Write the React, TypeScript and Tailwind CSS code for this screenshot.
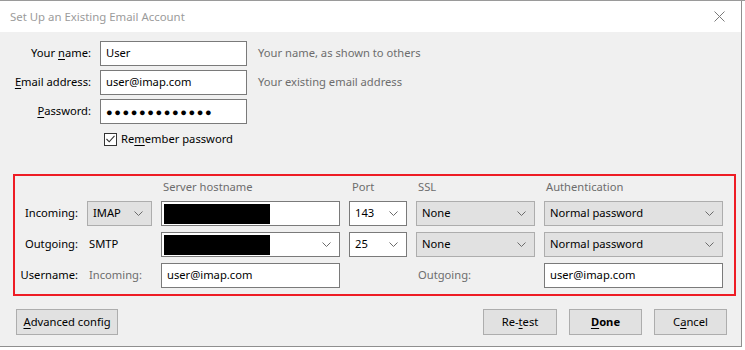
import React from 'react';

const font = { fontFamily: '"Noto Sans", "Open Sans", sans-serif' };

const Chevron = () => (
  <svg width="9" height="5" viewBox="0 0 9 5" className="shrink-0">
    <path d="M0.5 0.5 L4.5 4.5 L8.5 0.5" fill="none" stroke="#6b6b6b" strokeWidth="1" />
  </svg>
);

const Key: React.FC<{ children: React.ReactNode }> = ({ children }) => (
  <span className="underline underline-offset-2">{children}</span>
);

const TextBox: React.FC<{ className?: string; children?: React.ReactNode }> = ({
  className = '',
  children,
}) => (
  <div
    className={`h-[25px] bg-white border border-[#7a7a7a] flex items-center px-[5px] text-black ${className}`}
  >
    {children}
  </div>
);

const Select: React.FC<{ value: string; white?: boolean; className?: string }> = ({
  value,
  white,
  className = '',
}) => (
  <div
    className={`h-[25px] border flex items-center justify-between pl-[5px] pr-[8px] text-black ${
      white ? 'bg-white border-[#7a7a7a]' : 'bg-[#e1e1e1] border-[#adadad]'
    } ${className}`}
  >
    <span>{value}</span>
    <Chevron />
  </div>
);

const Button: React.FC<{ children: React.ReactNode; className?: string }> = ({
  children,
  className = '',
}) => (
  <div
    className={`h-[26px] bg-[#e1e1e1] border border-[#adadad] flex items-center justify-center text-black ${className}`}
  >
    {children}
  </div>
);

const Hidden = () => <div className="w-[106px] h-[20px] bg-black -ml-[3px]" />;

export default function App() {
  return (
    <div className="w-[745px] h-[350px] bg-white overflow-hidden text-[11.2px]" style={font}>
      <div className="h-[1px] bg-[#9a9a9a]" />
      <div className="w-[742px] h-[346px] flex flex-col border-r border-b border-[#8f8f8f]">
        {/* Title bar */}
        <div className="h-[31px] bg-white flex items-center justify-between pl-[10px] pr-[16px]">
          <span className="text-[#9b9b9b] text-[11.4px]">Set Up an Existing Email Account</span>
          <svg width="11" height="11" viewBox="0 0 11 11">
            <path d="M0.5 0.5 L10.5 10.5 M10.5 0.5 L0.5 10.5" stroke="#7a7a7a" strokeWidth="1" />
          </svg>
        </div>

        <div className="flex-1 bg-[#f0f0f0] flex flex-col">
          {/* Account */}
          <div className="grid grid-cols-[91px_147px_auto] gap-x-[9px] gap-y-[4px] pt-[9px] items-center">
            <div className="text-right">
              Your <Key>n</Key>ame:
            </div>
            <TextBox>User</TextBox>
            <div className="text-[#6d6d6d] pl-[2px]">Your name, as shown to others</div>

            <div className="text-right">
              <Key>E</Key>mail address:
            </div>
            <TextBox>user@imap.com</TextBox>
            <div className="text-[#6d6d6d] pl-[2px]">Your existing email address</div>

            <div className="text-right">
              <Key>P</Key>assword:
            </div>
            <TextBox>
              <span className="text-[11px] tracking-[1.6px] leading-none">●●●●●●●●●●●●●</span>
            </TextBox>
            <div />
          </div>

          <div className="flex items-center gap-[4px] pl-[104px] mt-[8px] h-[14px]">
            <div className="w-[13px] h-[13px] border border-[#333] bg-white flex items-center justify-center">
              <svg width="9" height="8" viewBox="0 0 9 8">
                <path d="M0.5 4 L3.2 6.8 L8.5 0.8" fill="none" stroke="#333" strokeWidth="1.1" />
              </svg>
            </div>
            <span>
              Re<Key>m</Key>ember password
            </span>
          </div>

          {/* Server settings */}
          <div className="mt-[28px] ml-[13px] w-[723px] h-[122px] border-2 border-[#ee1c25] pr-[11px]">
            <div className="grid grid-cols-[63px_65px_179px_58px_119px_179px] grid-rows-[19px_25px_25px_25px] gap-x-[9px] gap-y-[6px] items-center">
              <div />
              <div />
              <div className="text-[#6d6d6d] pl-[2px] pt-[3px]">Server hostname</div>
              <div className="text-[#6d6d6d] pl-[3px] pt-[3px]">Port</div>
              <div className="text-[#6d6d6d] pl-[2px] pt-[3px]">SSL</div>
              <div className="text-[#6d6d6d] pl-[2px] pt-[3px]">Authentication</div>

              <div className="text-right">Incoming:</div>
              <Select value="IMAP" />
              <TextBox>
                <Hidden />
              </TextBox>
              <Select value="143" white />
              <Select value="None" />
              <Select value="Normal password" />

              <div className="text-right">Outgoing:</div>
              <div className="pl-[2px]">SMTP</div>
              <div className="h-[25px] bg-white border border-[#7a7a7a] flex items-center justify-between pl-[5px] pr-[8px]">
                <Hidden />
                <Chevron />
              </div>
              <Select value="25" white />
              <Select value="None" />
              <Select value="Normal password" />

              <div className="text-right">Username:</div>
              <div className="text-[#6d6d6d] pl-[2px]">Incoming:</div>
              <TextBox>user@imap.com</TextBox>
              <div />
              <div className="text-[#6d6d6d] pl-[2px]">Outgoing:</div>
              <TextBox>user@imap.com</TextBox>
            </div>
          </div>

          {/* Buttons */}
          <div className="flex items-center mt-[13px] pl-[16px] pr-[14px]">
            <Button className="w-[102px]">
              <span>
                <Key>A</Key>dvanced config
              </span>
            </Button>
            <div className="flex-1" />
            <Button className="w-[74px]">
              <span>
                Re-<Key>t</Key>est
              </span>
            </Button>
            <Button className="w-[73px] ml-[12px] font-bold">
              <span>
                <Key>D</Key>one
              </span>
            </Button>
            <Button className="w-[73px] ml-[12px]">
              <span>
                C<Key>a</Key>ncel
              </span>
            </Button>
          </div>
        </div>
      </div>
    </div>
  );
}
